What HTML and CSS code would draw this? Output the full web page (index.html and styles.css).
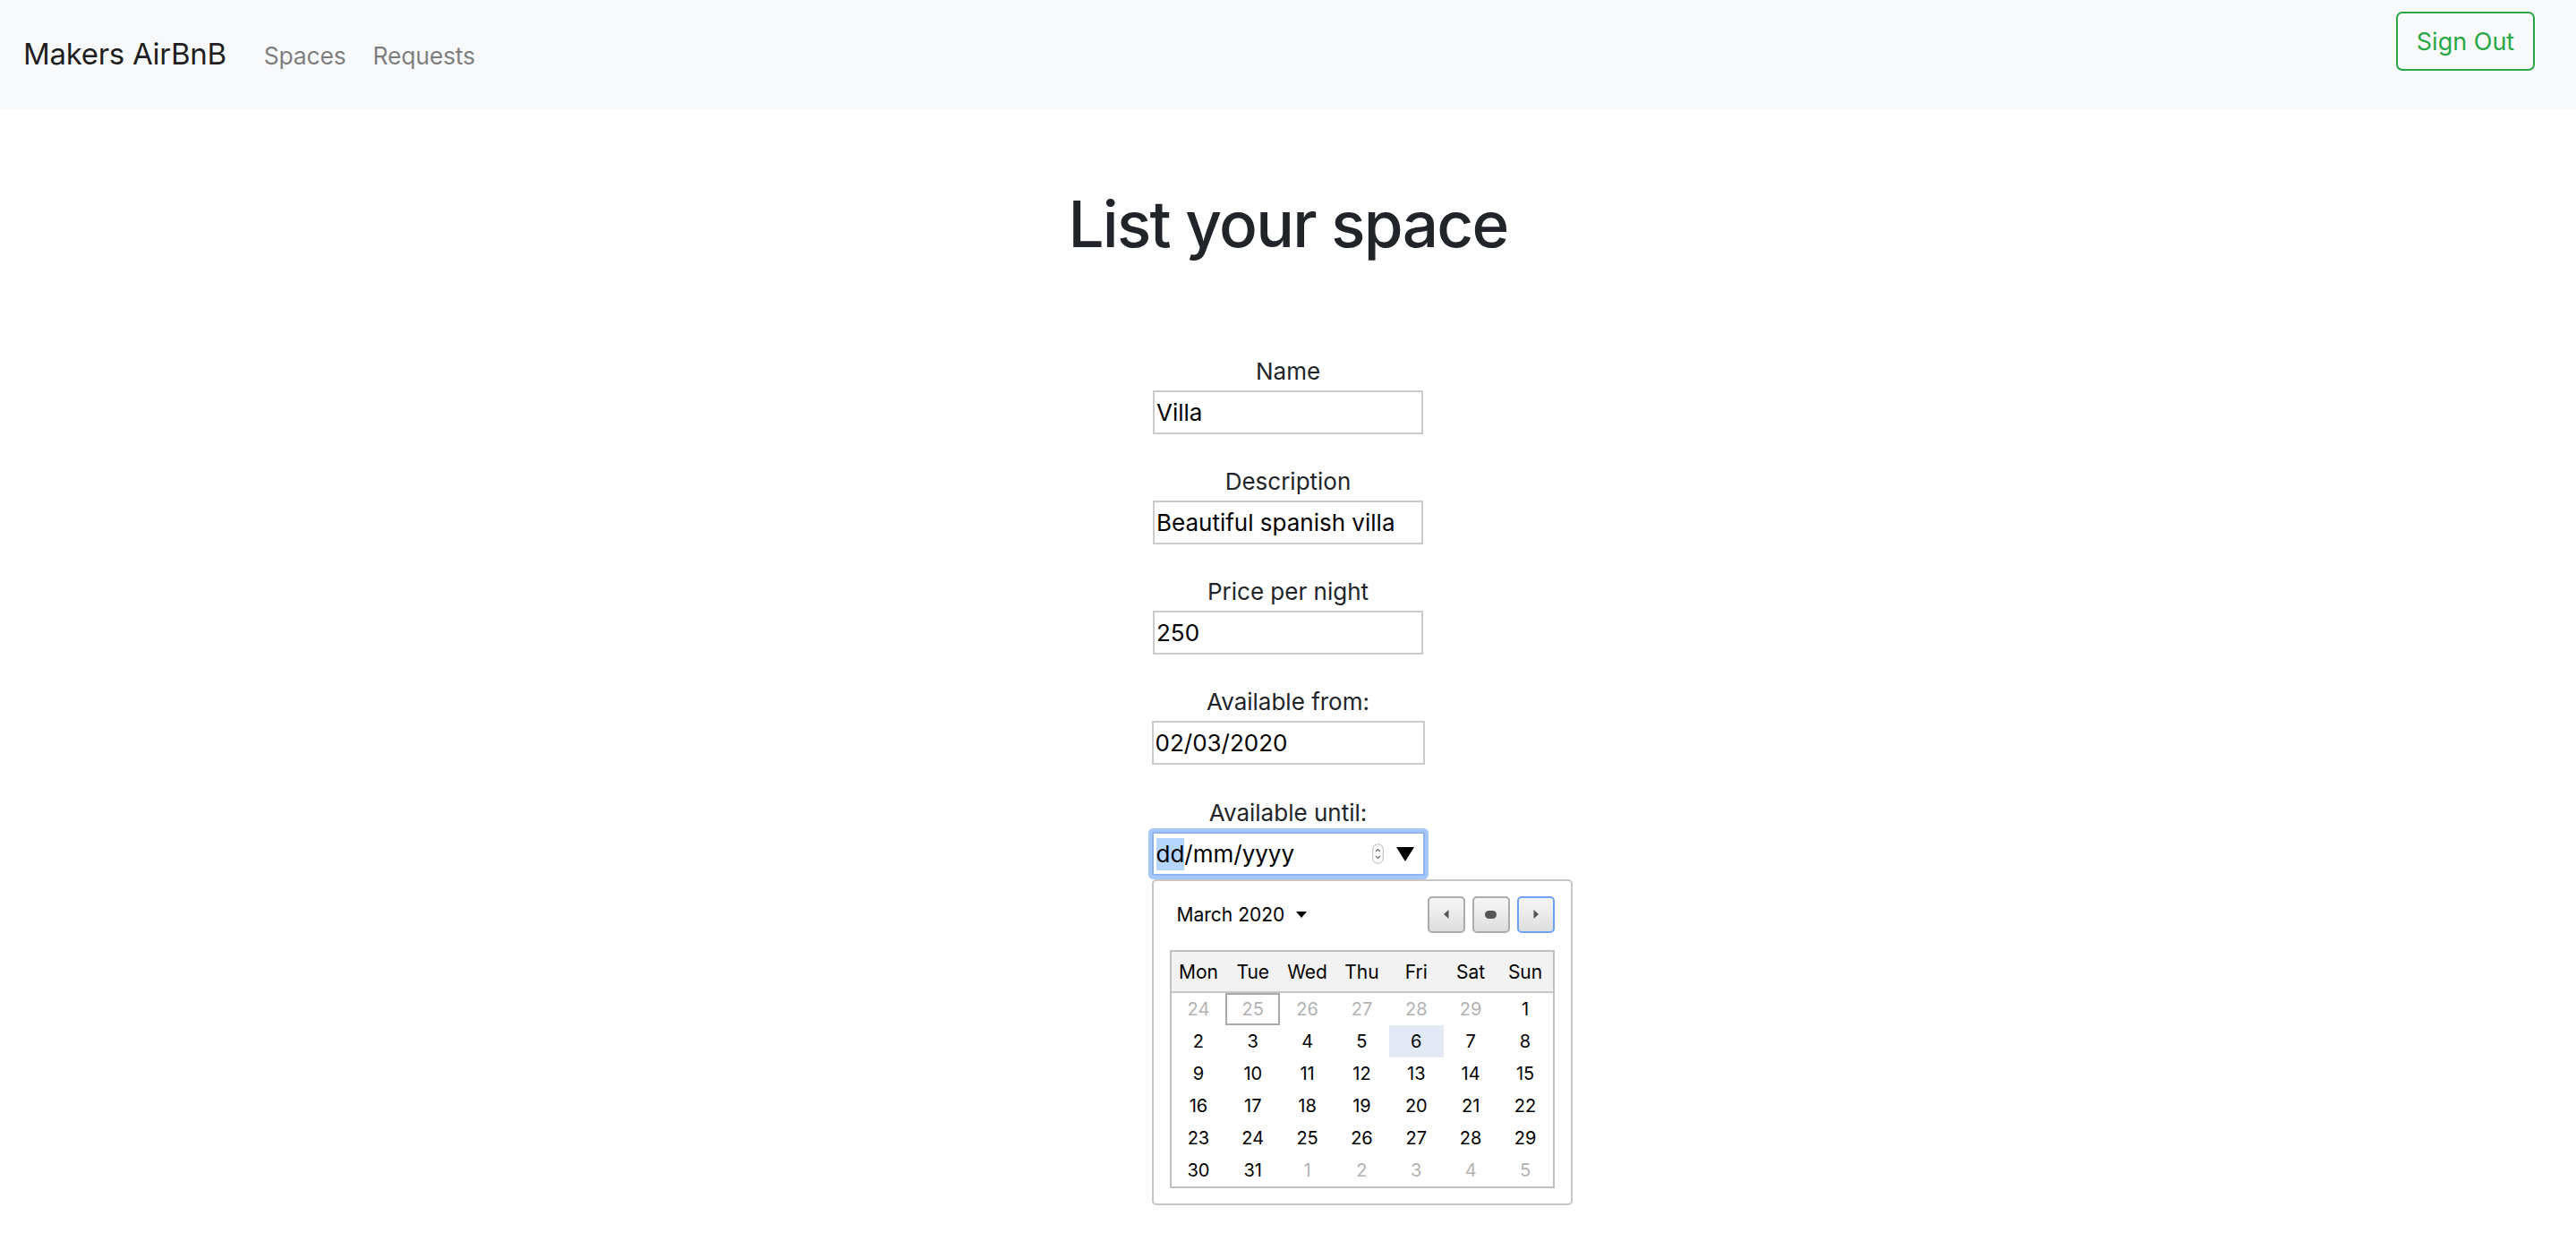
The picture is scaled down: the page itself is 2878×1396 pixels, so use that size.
FILE: index.html
```html
<!DOCTYPE html>
<html lang="en">
<head>
<meta charset="utf-8">
<title>Makers AirBnB</title>
<link rel="stylesheet" href="styles.css">
</head>
<body>
<nav class="navbar">
  <div class="nav-left">
    <a class="brand" href="#">Makers AirBnB</a>
    <a class="nav-link" href="#">Spaces</a>
    <a class="nav-link" href="#">Requests</a>
  </div>
  <button class="btn-signout" type="button">Sign Out</button>
</nav>

<main class="page">
  <h1 class="title">List your space</h1>
  <form class="space-form">
    <div class="field">
      <label class="field-label">Name</label>
      <input class="text-input" type="text" value="Villa">
    </div>
    <div class="field">
      <label class="field-label">Description</label>
      <input class="text-input" type="text" value="Beautiful spanish villa">
    </div>
    <div class="field">
      <label class="field-label">Price per night</label>
      <input class="text-input" type="text" value="250">
    </div>
    <div class="field">
      <label class="field-label">Available from:</label>
      <input class="text-input date-input" type="text" value="02/03/2020">
    </div>
    <div class="field field-last">
      <label class="field-label">Available until:</label>
      <div class="date-wrap">
        <div class="date-box">
          <span class="date-text"><span class="seg-selected">dd</span>/mm/yyyy</span>
          <svg class="spinner" width="13" height="23" viewBox="0 0 13 23">
            <rect x="0.75" y="0.75" width="11.5" height="21.5" rx="5.75" fill="#fff" stroke="#b4b4b4" stroke-width="1"/>
            <path d="M4 9 L6.5 6.5 L9 9" fill="none" stroke="#6a6a6a" stroke-width="1.2"/>
            <path d="M4 14 L6.5 16.5 L9 14" fill="none" stroke="#6a6a6a" stroke-width="1.2"/>
          </svg>
          <svg class="drop-arrow" width="20" height="16" viewBox="0 0 20 16">
            <path d="M0 0 H20 L10 16 Z" fill="#000"/>
          </svg>
        </div>

        <div class="datepicker">
          <div class="dp-header">
            <div class="dp-month">March 2020
              <svg class="dp-month-caret" width="12" height="7" viewBox="0 0 12 7"><path d="M0 0 H12 L6 7 Z" fill="#000"/></svg>
            </div>
            <div class="dp-buttons">
              <button class="dp-btn" type="button">
                <svg width="6" height="10" viewBox="0 0 6 10"><path d="M5.5 0 V10 L0 5 Z" fill="#555"/></svg>
              </button>
              <button class="dp-btn" type="button">
                <svg width="13" height="9" viewBox="0 0 13 9"><rect x="0" y="0" width="13" height="9" rx="4.5" fill="#555"/></svg>
              </button>
              <button class="dp-btn dp-btn-focus" type="button">
                <svg width="6" height="10" viewBox="0 0 6 10"><path d="M0.5 0 V10 L6 5 Z" fill="#555"/></svg>
              </button>
            </div>
          </div>
          <table class="dp-table">
            <thead>
              <tr><th>Mon</th><th>Tue</th><th>Wed</th><th>Thu</th><th>Fri</th><th>Sat</th><th>Sun</th></tr>
            </thead>
            <tbody>
              <tr><td class="other">24</td><td class="other boxed">25</td><td class="other">26</td><td class="other">27</td><td class="other">28</td><td class="other">29</td><td>1</td></tr>
              <tr><td>2</td><td>3</td><td>4</td><td>5</td><td class="today">6</td><td>7</td><td>8</td></tr>
              <tr><td>9</td><td>10</td><td>11</td><td>12</td><td>13</td><td>14</td><td>15</td></tr>
              <tr><td>16</td><td>17</td><td>18</td><td>19</td><td>20</td><td>21</td><td>22</td></tr>
              <tr><td>23</td><td>24</td><td>25</td><td>26</td><td>27</td><td>28</td><td>29</td></tr>
              <tr><td>30</td><td>31</td><td class="other">1</td><td class="other">2</td><td class="other">3</td><td class="other">4</td><td class="other">5</td></tr>
            </tbody>
          </table>
        </div>
      </div>
    </div>
  </form>
</main>
</body>
</html>
```

FILE: styles.css
```css
* {
  box-sizing: border-box;
}

html,
body {
  min-height: 100%;
}

body {
  margin: 0;
  background: #ffffff;
  color: #212529;
  font-family: Inter, "Liberation Sans", sans-serif;
}

/* ---------- navbar ---------- */
.navbar {
  height: 122px;
  background: #f8f9fa;
  display: flex;
  align-items: center;
  padding: 0 46px 0 26px;
}

.nav-left {
  display: flex;
  align-items: baseline;
}

.brand {
  font-size: 33px;
  line-height: 40px;
  letter-spacing: -0.3px;
  color: rgba(0, 0, 0, 0.9);
  text-decoration: none;
  margin-right: 27px;
}

.nav-link {
  font-size: 26.5px;
  line-height: 40px;
  letter-spacing: -0.2px;
  color: rgba(0, 0, 0, 0.5);
  text-decoration: none;
  padding: 0 15px;
}

.btn-signout {
  margin-left: auto;
  align-self: flex-start;
  margin-top: 13px;
  width: 155px;
  height: 66px;
  border: 2px solid #28a745;
  border-radius: 7px;
  background: transparent;
  color: #28a745;
  font-family: Inter, "Liberation Sans", sans-serif;
  font-size: 27px;
  padding: 0;
}

/* ---------- page ---------- */
.page {
  text-align: center;
  padding-bottom: 60px;
}

.title {
  margin: 85px 0 106px;
  font-size: 71px;
  line-height: 86px;
  letter-spacing: -1.7px;
  font-weight: 500;
  color: #212529;
}

.space-form {
  display: flex;
  flex-direction: column;
  align-items: center;
  gap: 37px;
}

.field {
  display: flex;
  flex-direction: column;
  align-items: center;
  gap: 6px;
}

.field-last {
  margin-top: 1px;
}

.field-label {
  font-size: 26px;
  line-height: 31px;
  color: #212529;
}

.text-input {
  width: 302px;
  height: 49px;
  border: 2px solid #cbcbcb;
  padding: 0 2px;
  font-family: Inter, "Liberation Sans", sans-serif;
  font-size: 26px;
  color: #000;
  background: #fff;
  outline: none;
}

.date-input {
  width: 305px;
  padding: 0 2px;
}

/* ---------- focused date input ---------- */
.date-wrap {
  width: 305px;
  display: flex;
  flex-direction: column;
  align-items: flex-start;
}

.date-box {
  width: 305px;
  height: 49px;
  flex: none;
  border: 2px solid #8db4f0;
  border-radius: 2px;
  box-shadow: 0 0 0 4px #a6c8f8;
  display: flex;
  align-items: center;
  padding: 0 3px;
  background: #fff;
}

.date-text {
  font-size: 26px;
  line-height: 36px;
  color: #000;
  text-align: left;
}

.seg-selected {
  background: #b4d5fe;
  display: inline-block;
  line-height: 36px;
}

.spinner {
  margin-left: auto;
  margin-right: 14px;
}

.drop-arrow {
  margin-right: 7px;
}

/* ---------- datepicker popup ---------- */
.datepicker {
  flex: none;
  margin-top: 4px;
  width: 470px;
  height: 364px;
  border: 2px solid #c6c6c6;
  border-radius: 5px;
  background: #fff;
  padding: 17px 18px 18px;
  text-align: left;
}

.dp-header {
  display: flex;
  align-items: center;
  justify-content: space-between;
  height: 40px;
  margin-bottom: 20px;
}

.dp-month {
  padding-left: 8px;
  font-size: 21px;
  color: #000;
  display: flex;
  align-items: center;
}

.dp-month-caret {
  margin-left: 13px;
}

.dp-buttons {
  display: flex;
  gap: 8px;
}

.dp-btn {
  width: 42px;
  height: 41px;
  border: 2px solid #ababab;
  border-radius: 5px;
  background: linear-gradient(#f6f6f6, #dedede);
  display: flex;
  align-items: center;
  justify-content: center;
  padding: 0;
}

.dp-btn-focus {
  border-color: #6ea2f5;
}

.dp-table {
  width: 430px;
  border-collapse: separate;
  border-spacing: 0;
  border: 2px solid #c0c0c0;
  table-layout: fixed;
}

.dp-table th {
  height: 46px;
  background: #f2f2f2;
  border-bottom: 2px solid #c6c6c6;
  font-size: 21px;
  font-weight: 400;
  color: #000;
  padding: 0;
  text-align: center;
}

.dp-table td {
  height: 36px;
  padding: 0;
  text-align: center;
  font-size: 20px;
  color: #000;
}

.dp-table td.other {
  color: #b3b3b3;
}

.dp-table td.boxed {
  box-shadow: inset 0 0 0 2px #a9a9a9;
}

.dp-table td.today {
  background: #e3eaf6;
}
```
